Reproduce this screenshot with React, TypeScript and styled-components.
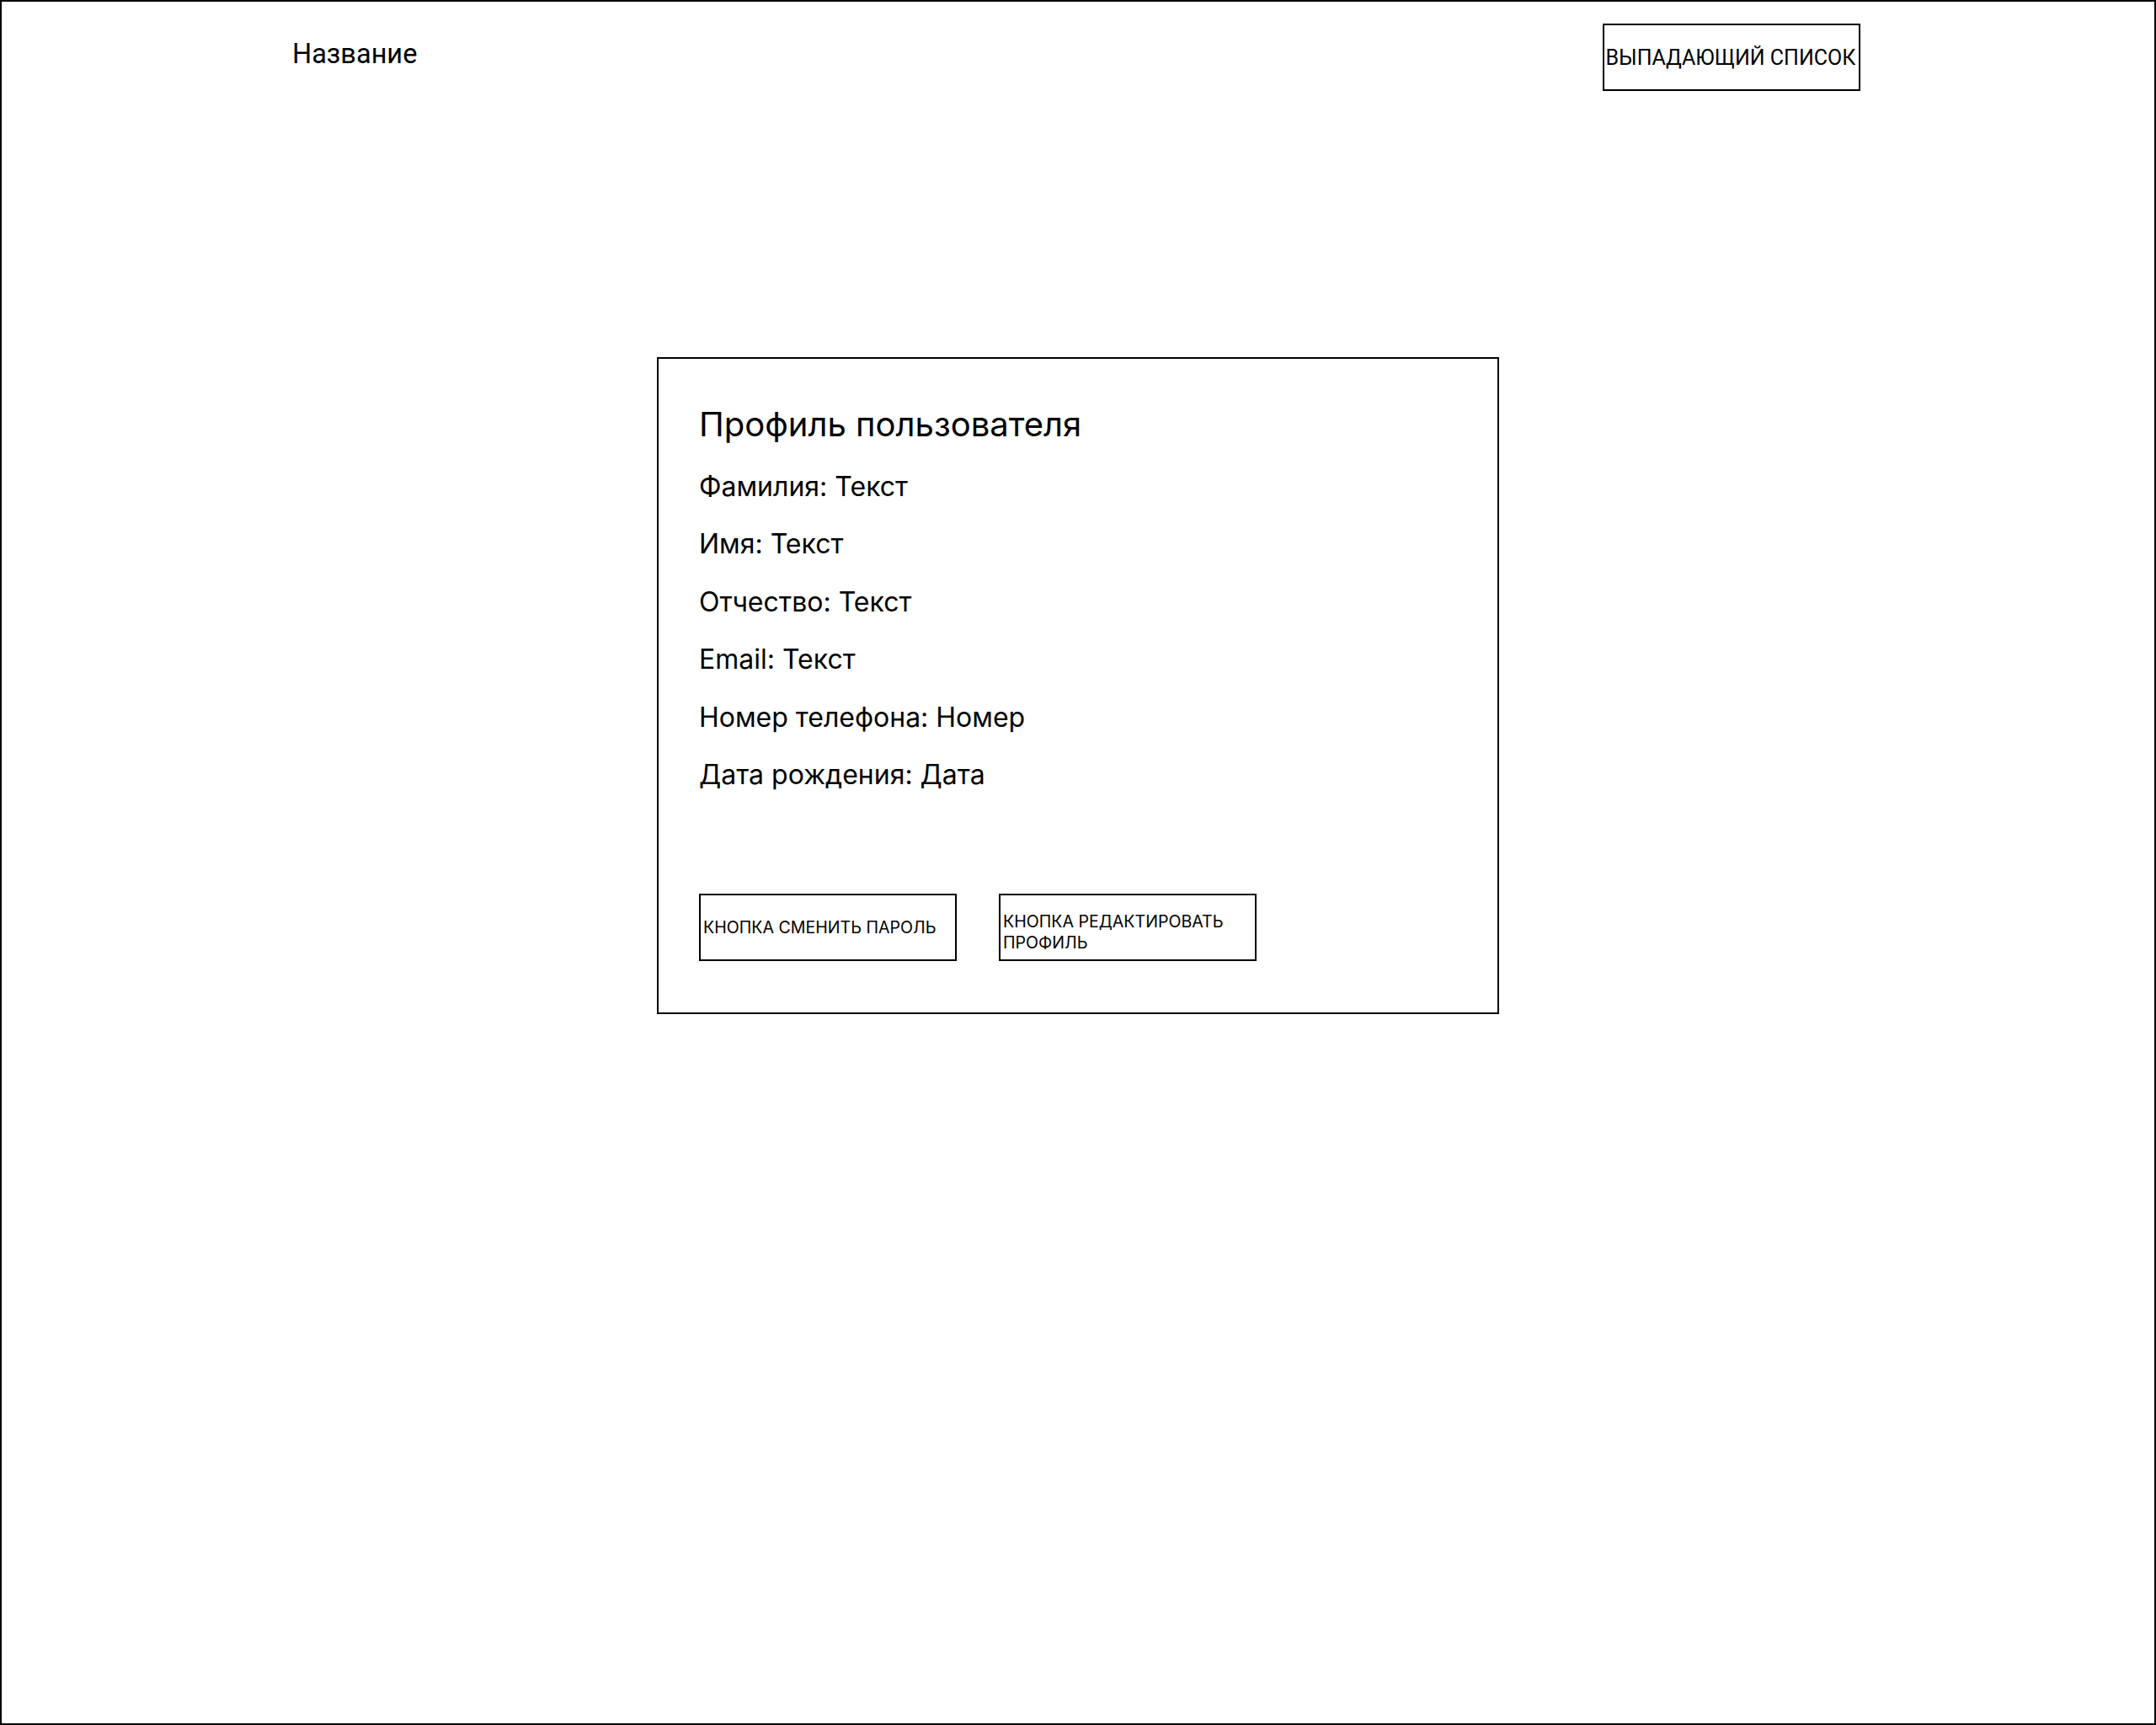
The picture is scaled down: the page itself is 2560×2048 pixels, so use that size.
import React from "react";
import styled, { createGlobalStyle } from "styled-components";

const GlobalStyle = createGlobalStyle`
  html, body {
    margin: 0;
    padding: 0;
    background: #ffffff;
  }
  * { box-sizing: border-box; }
  body {
    font-family: Inter, "Noto Sans", sans-serif;
    color: #000000;
  }
`;

const Page = styled.div`
  width: 2560px;
  height: 2048px;
  border: 2px solid #000;
  background: #fff;
  display: flex;
  flex-direction: column;
  align-items: center;
`;

const Header = styled.header`
  width: 100%;
  display: flex;
  justify-content: space-between;
  align-items: flex-start;
  padding: 26px 349.5px 0 345px;
`;

const Brand = styled.div`
  font-family: Roboto, "Noto Sans", sans-serif;
  font-size: 32.5px;
  line-height: 38px;
  margin-top: 16.5px;
`;

const Dropdown = styled.button`
  width: 306px;
  height: 80px;
  border: 2px solid #000;
  background: #fff;
  padding: 0 2px;
  font-family: Roboto, "Noto Sans", sans-serif;
  font-size: 25px;
  color: #000;
  text-align: left;
  white-space: nowrap;
  cursor: pointer;
`;

const Card = styled.section`
  width: 1000px;
  margin-top: 316px;
  border: 2px solid #000;
  padding: 53.5px 48px 61px 48px;
  display: flex;
  flex-direction: column;
`;

const Title = styled.h1`
  margin: 0;
  font-family: Inter, "Noto Sans", sans-serif;
  font-weight: 400;
  font-size: 40px;
  line-height: 48px;
`;

const Fields = styled.div`
  margin-top: 31px;
  display: flex;
  flex-direction: column;
  gap: 30.6px;
`;

const Field = styled.div`
  font-family: Inter, "Noto Sans", sans-serif;
  font-size: 32px;
  line-height: 38px;
`;

const Actions = styled.div`
  margin-top: 121.5px;
  display: flex;
  gap: 50px;
`;

const ActionButton = styled.button<{ $shift?: number }>`
  width: 306px;
  height: 80px;
  border: 2px solid #000;
  background: #fff;
  padding: ${(p) => p.$shift ?? 0}px 3px 0 3px;
  font-family: Inter, "Noto Sans", sans-serif;
  font-size: 19.6px;
  line-height: 24.5px;
  color: #000;
  text-align: left;
  cursor: pointer;
`;

const fields = [
  "Фамилия: Текст",
  "Имя: Текст",
  "Отчество: Текст",
  "Email: Текст",
  "Номер телефона: Номер",
  "Дата рождения: Дата",
];

export default function App() {
  return (
    <>
      <GlobalStyle />
      <Page>
        <Header>
          <Brand>Название</Brand>
          <Dropdown>ВЫПАДАЮЩИЙ СПИСОК</Dropdown>
        </Header>
        <Card>
          <Title>Профиль пользователя</Title>
          <Fields>
            {fields.map((f) => (
              <Field key={f}>{f}</Field>
            ))}
          </Fields>
          <Actions>
            <ActionButton>КНОПКА СМЕНИТЬ ПАРОЛЬ</ActionButton>
            <ActionButton $shift={12}>КНОПКА РЕДАКТИРОВАТЬ ПРОФИЛЬ</ActionButton>
          </Actions>
        </Card>
      </Page>
    </>
  );
}
